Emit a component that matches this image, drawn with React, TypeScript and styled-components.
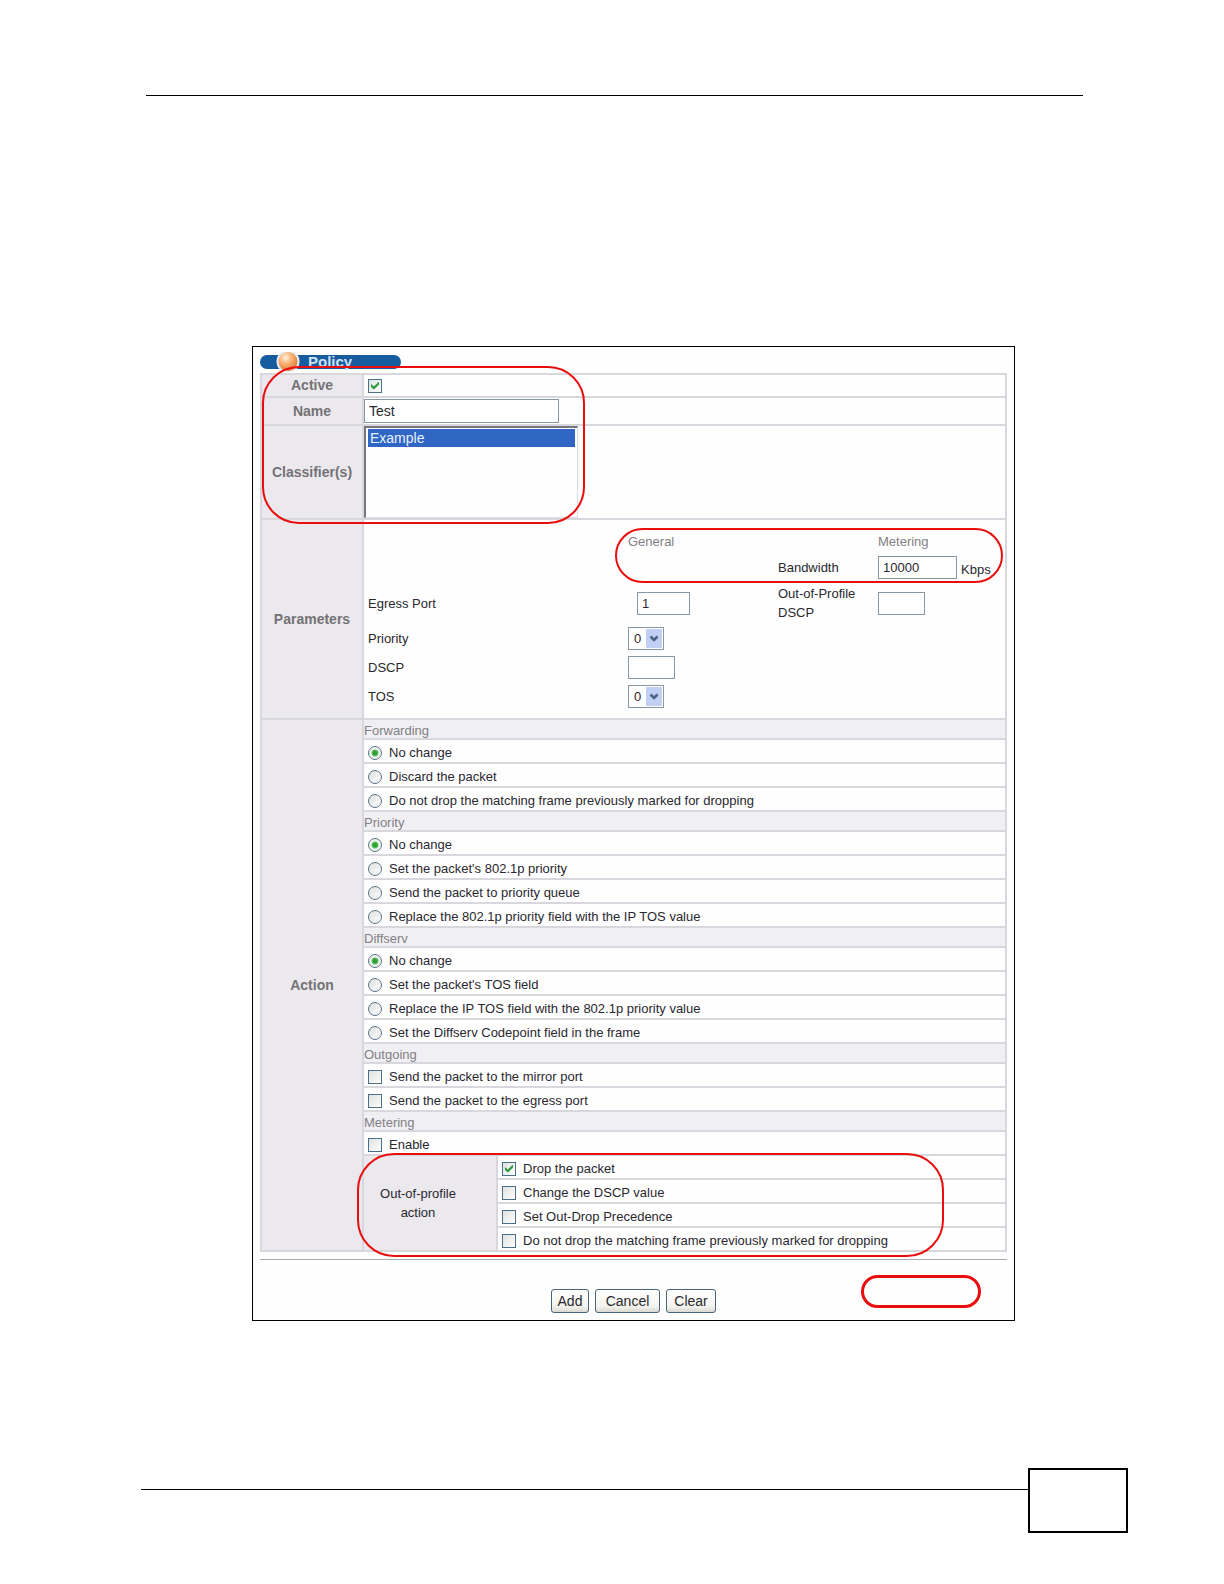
import React from "react";
import styled, { createGlobalStyle } from "styled-components";

const line = "#d7d7dd";
const ink = "#2a282e";
const muted = "#828084";
const mark = "#e90d0d";

const GlobalStyle = createGlobalStyle`
  *, *::before, *::after { box-sizing: border-box; }
  body {
    margin: 0;
    background: #fff;
    color: ${ink};
    font-family: "Liberation Sans", Arial, Helvetica, sans-serif;
    font-size: 13px;
    line-height: 19px;
  }
  input, select, button { font-family: inherit; margin: 0; }
`;

const Page = styled.div`
  display: flex;
  flex-direction: column;
`;

const HeaderRule = styled.header`
  margin: 95px 141px 0 146px;
  border-top: 1px solid #000;
`;

const Figure = styled.main`
  position: relative;
  margin: 250px 209px 0 252px;
  padding: 8px 7px 7px;
  border: 1px solid #000;
  background: #fefefe;
`;

const TitleBar = styled.h1`
  position: relative;
  width: 141px;
  height: 14px;
  margin: 0 0 4px;
  padding-left: 48px;
  border-radius: 7px;
  background: #175c9f;
  color: #cfe2f5;
  font-size: 15px;
  line-height: 14px;
`;

const Orb = styled.svg`
  position: absolute;
  left: 16px;
  top: -3px;
`;

const Sheet = styled.form`
  margin: 0;
`;

const Table = styled.div`
  border: solid ${line};
  border-width: 2px 2px 0;
`;

const Row = styled.div<{ $height?: number }>`
  display: grid;
  grid-template-columns: 102px 1fr;
  min-height: ${(p) => (p.$height ? `${p.$height}px` : "0")};
`;

const RowName = styled.div`
  display: flex;
  align-items: center;
  justify-content: center;
  border: solid ${line};
  border-width: 0 2px 2px 0;
  background: #ebe9ed;
  color: #747276;
  font-size: 14px;
  font-weight: bold;
`;

const RowBody = styled.div<{ $inset?: boolean }>`
  display: flex;
  align-items: center;
  padding-left: ${(p) => (p.$inset ? "4px" : "0")};
  border-bottom: 2px solid ${line};
`;

const TextBox = styled.input<{ $width: number; $indent?: boolean; $large?: boolean }>`
  width: ${(p) => p.$width}px;
  height: ${(p) => (p.$large ? 24 : 23)}px;
  margin-left: ${(p) => (p.$indent ? "9px" : "0")};
  padding: 0 4px;
  border: 1px solid #8997a3;
  border-radius: 0;
  background: #fff;
  color: ${ink};
  font-size: ${(p) => (p.$large ? 14 : 13)}px;
  outline: none;
`;

const ListBox = styled.select`
  appearance: none;
  width: 214px;
  height: 92px;
  padding: 1px 2px;
  border: solid #77757e;
  border-width: 2px 1px 1px 2px;
  border-right-color: #dddde3;
  border-bottom-color: #dddde3;
  border-radius: 0;
  background: #fefefe;
  font-size: 14px;
  overflow: hidden;
  outline: none;

  option {
    height: 18px;
    min-height: 18px;
    padding: 1px 2px 0;
    line-height: 18px;
  }
  option:checked {
    background: linear-gradient(#2f66c4, #2f66c4);
    color: #e8f0fc;
  }
`;

const Tick = styled.input`
  position: relative;
  appearance: none;
  flex: none;
  width: 14px;
  height: 14px;
  border: 1px solid #4c6f88;
  background: linear-gradient(135deg, #dde3e1, #fdfdfd);

  &:checked::before {
    content: "";
    position: absolute;
    inset: 2px;
    background: #2c9c3c;
    clip-path: polygon(0 32%, 36% 62%, 100% 0, 100% 36%, 36% 100%, 0 68%);
  }
`;

const Dot = styled.input`
  appearance: none;
  flex: none;
  width: 14px;
  height: 14px;
  border: 1px solid #587286;
  border-radius: 50%;
  background: linear-gradient(135deg, #dde1e0, #fdfdfd);

  &:checked {
    background: radial-gradient(circle, #2da32f 2px, #6fc26f 3px, #eef5ee 4px);
  }
`;

const Params = styled.div`
  display: grid;
  grid-template-columns: 260fr 150fr 100fr 127fr;
  grid-template-rows: 22px 30px 42px 29px 29px 29px;
  align-items: center;
  padding: 10px 0 7px 4px;
  border-bottom: 2px solid ${line};
`;

const ColumnTitle = styled.span<{ $col: number }>`
  grid-column: ${(p) => p.$col};
  grid-row: 1;
  color: ${muted};
`;

const ParamLabel = styled.label<{ $col: number; $row: number }>`
  grid-column: ${(p) => p.$col};
  grid-row: ${(p) => p.$row};
`;

const ParamField = styled.div<{ $col: number; $row: number }>`
  grid-column: ${(p) => p.$col};
  grid-row: ${(p) => p.$row};
  display: flex;
  align-items: center;
  gap: 4px;
`;

const Unit = styled.span`
  align-self: flex-end;
`;

const DropBox = styled.span`
  position: relative;
  display: flex;
`;

const Drop = styled.select`
  appearance: none;
  width: 36px;
  height: 23px;
  padding: 0 5px;
  border: 1px solid #8997a3;
  border-radius: 0;
  background: #fff;
  color: ${ink};
  font-size: 13px;
  outline: none;
`;

const DropArrow = styled.svg`
  position: absolute;
  right: 2px;
  top: 2px;
  pointer-events: none;
`;

const Group = styled.fieldset`
  display: block;
  min-width: 0;
  margin: 0;
  padding: 0;
  border: 0;
`;

const GroupTitle = styled.legend`
  display: block;
  width: 100%;
  height: 20px;
  padding: 1px 0 0;
  border-bottom: 2px solid ${line};
  background: #f0eff3;
  color: ${muted};
`;

const Option = styled.label`
  display: flex;
  align-items: center;
  gap: 7px;
  height: 24px;
  padding: 3px 0 0 4px;
  border-bottom: 2px solid ${line};
`;

const Profile = styled.div`
  display: grid;
  grid-template-columns: 134px 1fr;
`;

const ProfileName = styled.div`
  display: flex;
  align-items: center;
  padding: 0 32px 0 8px;
  border: solid ${line};
  border-width: 0 2px 2px 0;
  background: #ebe9ed;
  text-align: center;
`;

const Divider = styled.hr`
  height: 1px;
  margin: 7px 0 29px;
  border: 0;
  background: #a9a9ab;
`;

const Buttons = styled.div`
  display: flex;
  justify-content: center;
  gap: 6px;
`;

const PushButton = styled.button<{ $width: number }>`
  width: ${(p) => p.$width}px;
  height: 24px;
  padding: 0;
  border: 1px solid #46647a;
  border-radius: 3px;
  background: linear-gradient(#fff, #f3f3ee 75%, #d9d8d0);
  color: ${ink};
  font-size: 14px;
`;

const Callout = styled.span<{
  $top: number;
  $left?: number;
  $right?: number;
  $width: number;
  $height: number;
  $radius: number;
  $stroke?: number;
}>`
  position: absolute;
  top: ${(p) => p.$top}px;
  left: ${(p) => (p.$left === undefined ? "auto" : `${p.$left}px`)};
  right: ${(p) => (p.$right === undefined ? "auto" : `${p.$right}px`)};
  width: ${(p) => p.$width}px;
  height: ${(p) => p.$height}px;
  border: ${(p) => p.$stroke ?? 2}px solid ${mark};
  border-radius: ${(p) => p.$radius}px;
  pointer-events: none;
`;

const Footer = styled.footer`
  display: flex;
  margin: 147px 96px 50px 141px;
`;

const FooterRule = styled.div`
  flex: 1;
  margin-top: 21px;
  border-top: 1px solid #000;
`;

const PageBox = styled.div`
  width: 100px;
  height: 65px;
  border: 2px solid #000;
`;

type RadioGroup = { title: string; name: string; options: string[] };

const radioGroups: RadioGroup[] = [
  {
    title: "Forwarding",
    name: "forwarding",
    options: [
      "No change",
      "Discard the packet",
      "Do not drop the matching frame previously marked for dropping",
    ],
  },
  {
    title: "Priority",
    name: "priority-action",
    options: [
      "No change",
      "Set the packet's 802.1p priority",
      "Send the packet to priority queue",
      "Replace the 802.1p priority field with the IP TOS value",
    ],
  },
  {
    title: "Diffserv",
    name: "diffserv",
    options: [
      "No change",
      "Set the packet's TOS field",
      "Replace the IP TOS field with the 802.1p priority value",
      "Set the Diffserv Codepoint field in the frame",
    ],
  },
];

const outgoing = ["Send the packet to the mirror port", "Send the packet to the egress port"];

const outOfProfile = [
  "Drop the packet",
  "Change the DSCP value",
  "Set Out-Drop Precedence",
  "Do not drop the matching frame previously marked for dropping",
];

function Check({ text, checked }: { text: string; checked?: boolean }) {
  return (
    <Option>
      <Tick type="checkbox" defaultChecked={checked} />
      {text}
    </Option>
  );
}

function Level({ id }: { id: string }) {
  return (
    <DropBox>
      <Drop id={id} defaultValue="0">
        {[0, 1, 2, 3, 4, 5, 6, 7].map((n) => (
          <option key={n}>{n}</option>
        ))}
      </Drop>
      <DropArrow width="16" height="19" viewBox="0 0 16 19" aria-hidden="true">
        <rect width="16" height="19" rx="1" fill="#c0cff3" />
        <path d="M4.5 7.5 8 11l3.5-3.5" fill="none" stroke="#4b6187" strokeWidth="2.6" />
      </DropArrow>
    </DropBox>
  );
}

export default function App() {
  return (
    <Page>
      <GlobalStyle />
      <HeaderRule />
      <Figure>
        <TitleBar>
          <Orb width="24" height="20" viewBox="0 0 24 20" aria-hidden="true">
            <defs>
              <radialGradient id="orb" cx="0.38" cy="0.3" r="0.75">
                <stop offset="0" stopColor="#fff1df" />
                <stop offset="0.4" stopColor="#f9b77c" />
                <stop offset="1" stopColor="#df7428" />
              </radialGradient>
            </defs>
            <circle cx="12" cy="9.5" r="11.5" fill="#e9edf2" />
            <circle cx="12" cy="9.5" r="9.5" fill="url(#orb)" />
          </Orb>
          Policy
        </TitleBar>
        <Sheet onSubmit={(e) => e.preventDefault()}>
          <Table>
            <Row $height={23}>
              <RowName as="label" htmlFor="active">Active</RowName>
              <RowBody $inset>
                <Tick id="active" type="checkbox" defaultChecked />
              </RowBody>
            </Row>
            <Row $height={28}>
              <RowName as="label" htmlFor="name">Name</RowName>
              <RowBody>
                <TextBox id="name" $width={195} $large defaultValue="Test" />
              </RowBody>
            </Row>
            <Row $height={94}>
              <RowName as="label" htmlFor="classifiers">Classifier(s)</RowName>
              <RowBody>
                <ListBox id="classifiers" multiple size={5} defaultValue={["Example"]}>
                  <option>Example</option>
                </ListBox>
              </RowBody>
            </Row>
            <Row>
              <RowName>Parameters</RowName>
              <Params>
                <ColumnTitle $col={2}>General</ColumnTitle>
                <ColumnTitle $col={4}>Metering</ColumnTitle>
                <ParamLabel $col={3} $row={2} htmlFor="bandwidth">Bandwidth</ParamLabel>
                <ParamField $col={4} $row={2}>
                  <TextBox id="bandwidth" $width={79} defaultValue="10000" />
                  <Unit>Kbps</Unit>
                </ParamField>
                <ParamLabel $col={1} $row={3} htmlFor="egress">Egress Port</ParamLabel>
                <ParamField $col={2} $row={3}>
                  <TextBox id="egress" $width={53} $indent defaultValue="1" />
                </ParamField>
                <ParamLabel $col={3} $row={3} htmlFor="profile-dscp">
                  Out-of-Profile DSCP
                </ParamLabel>
                <ParamField $col={4} $row={3}>
                  <TextBox id="profile-dscp" $width={47} />
                </ParamField>
                <ParamLabel $col={1} $row={4} htmlFor="priority">Priority</ParamLabel>
                <ParamField $col={2} $row={4}>
                  <Level id="priority" />
                </ParamField>
                <ParamLabel $col={1} $row={5} htmlFor="dscp">DSCP</ParamLabel>
                <ParamField $col={2} $row={5}>
                  <TextBox id="dscp" $width={47} />
                </ParamField>
                <ParamLabel $col={1} $row={6} htmlFor="tos">TOS</ParamLabel>
                <ParamField $col={2} $row={6}>
                  <Level id="tos" />
                </ParamField>
              </Params>
            </Row>
            <Row>
              <RowName>Action</RowName>
              <div>
                {radioGroups.map((group) => (
                  <Group key={group.name}>
                    <GroupTitle>{group.title}</GroupTitle>
                    {group.options.map((text, i) => (
                      <Option key={text}>
                        <Dot type="radio" name={group.name} defaultChecked={i === 0} />
                        {text}
                      </Option>
                    ))}
                  </Group>
                ))}
                <Group>
                  <GroupTitle>Outgoing</GroupTitle>
                  {outgoing.map((text) => (
                    <Check key={text} text={text} />
                  ))}
                </Group>
                <Group>
                  <GroupTitle>Metering</GroupTitle>
                  <Check text="Enable" />
                  <Profile>
                    <ProfileName>Out-of-profile action</ProfileName>
                    <div>
                      {outOfProfile.map((text, i) => (
                        <Check key={text} text={text} checked={i === 0} />
                      ))}
                    </div>
                  </Profile>
                </Group>
              </div>
            </Row>
          </Table>
          <Divider />
          <Buttons>
            <PushButton type="submit" $width={38}>Add</PushButton>
            <PushButton type="reset" $width={65}>Cancel</PushButton>
            <PushButton type="button" $width={50}>Clear</PushButton>
          </Buttons>
        </Sheet>
        <Callout $top={19} $left={9} $width={323} $height={158} $radius={37} />
        <Callout $top={181} $right={11} $width={388} $height={55} $radius={28} />
        <Callout $top={806} $left={104} $width={587} $height={104} $radius={37} />
        <Callout $top={928} $right={33} $width={120} $height={33} $radius={17} $stroke={3} />
      </Figure>
      <Footer>
        <FooterRule />
        <PageBox />
      </Footer>
    </Page>
  );
}
